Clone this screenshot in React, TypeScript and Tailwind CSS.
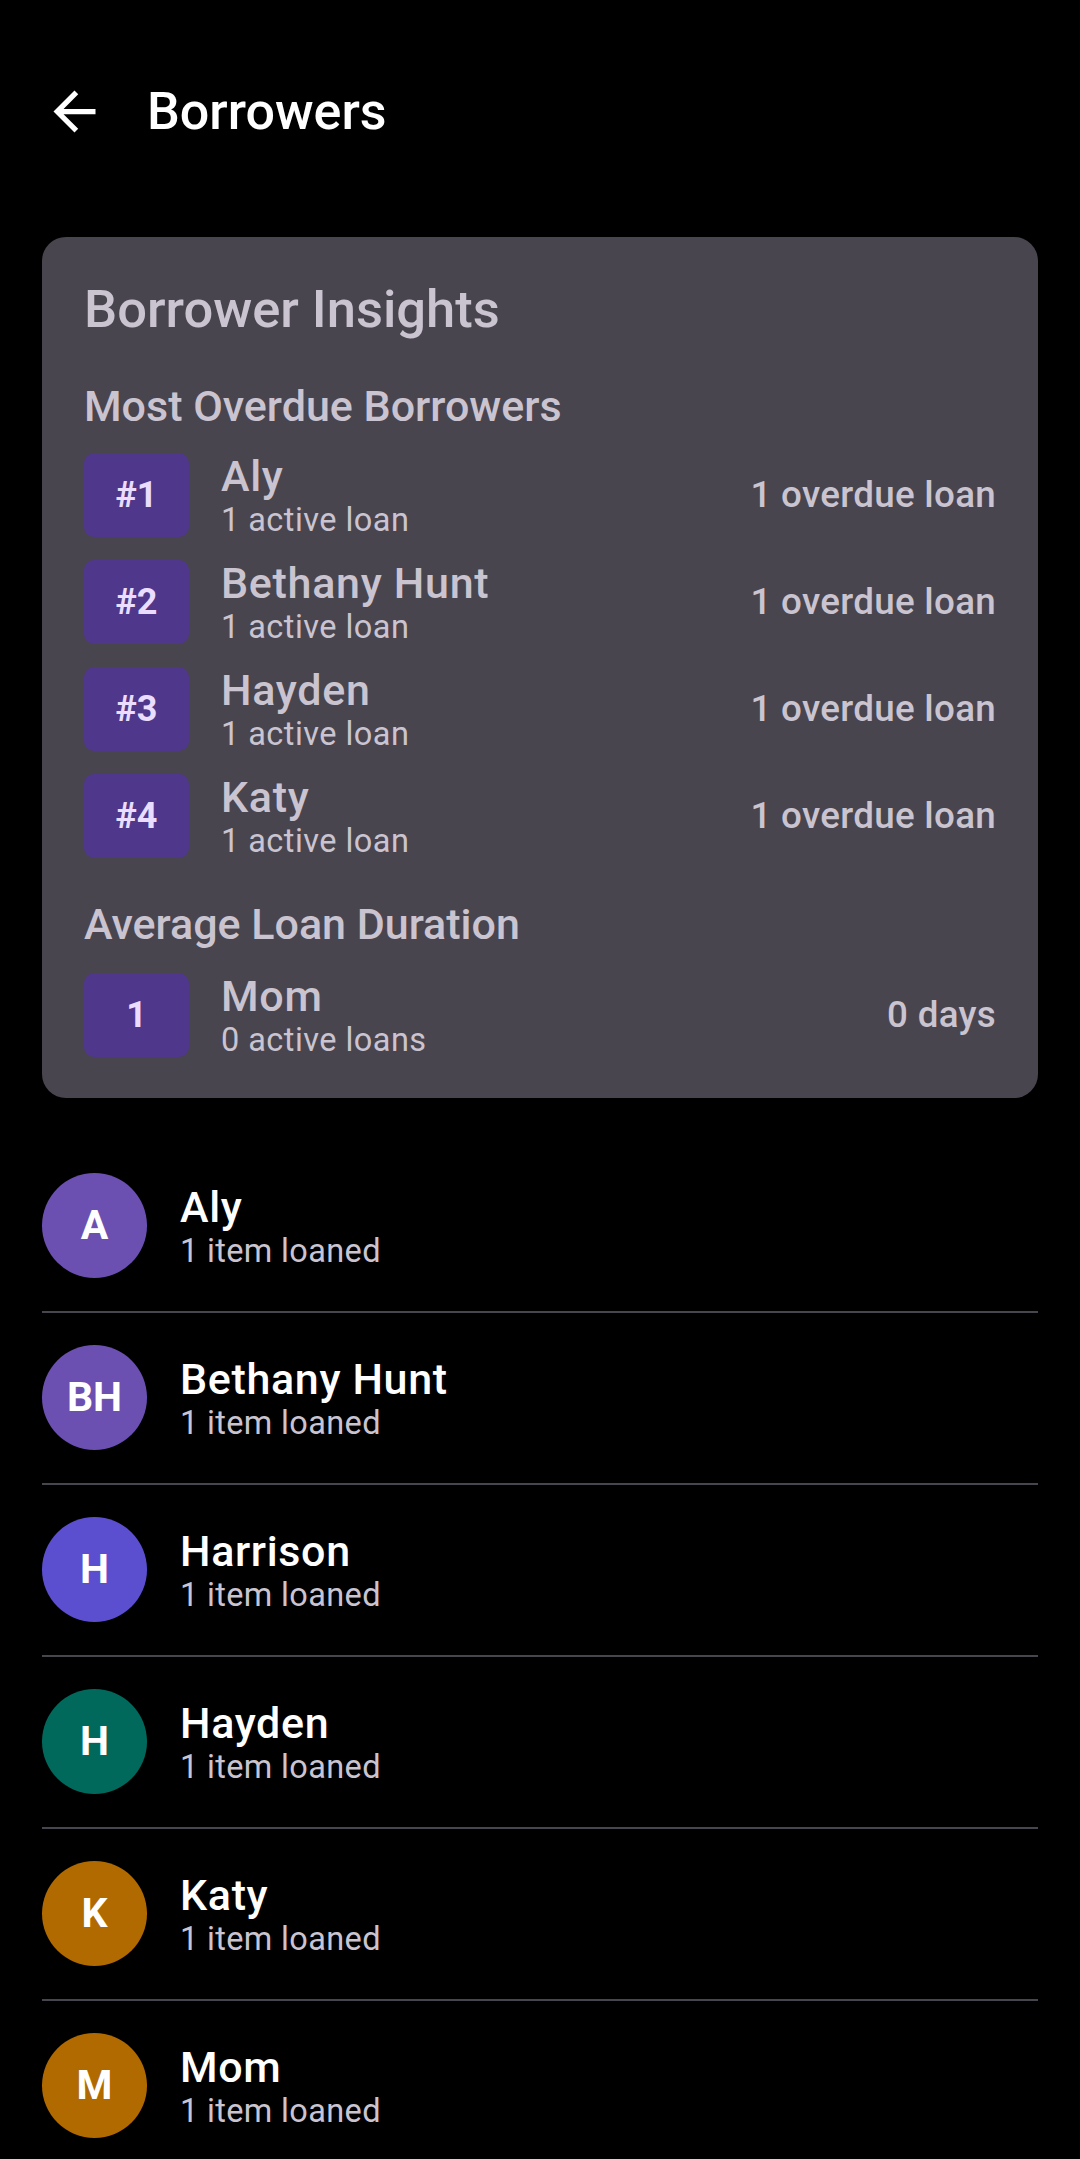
import React from "react";

type Rank = { badge: string; name: string; sub: string; value: string };

const overdue: Rank[] = [
  { badge: "#1", name: "Aly", sub: "1 active loan", value: "1 overdue loan" },
  { badge: "#2", name: "Bethany Hunt", sub: "1 active loan", value: "1 overdue loan" },
  { badge: "#3", name: "Hayden", sub: "1 active loan", value: "1 overdue loan" },
  { badge: "#4", name: "Katy", sub: "1 active loan", value: "1 overdue loan" },
];

const duration: Rank[] = [{ badge: "1", name: "Mom", sub: "0 active loans", value: "0 days" }];

type Person = { initials: string; name: string; color: string };

const people: Person[] = [
  { initials: "A", name: "Aly", color: "bg-[#6B50B1]" },
  { initials: "BH", name: "Bethany Hunt", color: "bg-[#6B50B1]" },
  { initials: "H", name: "Harrison", color: "bg-[#5B4FCF]" },
  { initials: "H", name: "Hayden", color: "bg-[#00695C]" },
  { initials: "K", name: "Katy", color: "bg-[#B06A00]" },
  { initials: "M", name: "Mom", color: "bg-[#B06A00]" },
];

function RankRow({ r }: { r: Rank }) {
  return (
    <div className="flex h-[88px] items-center">
      <div className="flex h-[84px] w-[105px] shrink-0 items-center justify-center rounded-[10px] bg-[#4F378B] text-[36px] font-bold text-[#EADDFF]">
        {r.badge}
      </div>
      <div className="ml-[32px] flex flex-col">
        <div className="text-[43px] leading-[50px] font-medium tracking-[0.7px]">{r.name}</div>
        <div className="text-[32.5px] leading-[38px] tracking-[0.45px]">{r.sub}</div>
      </div>
      <div className="ml-auto text-[36.75px] leading-[44px] font-medium tracking-[0.3px]">{r.value}</div>
    </div>
  );
}

export default function App() {
  return (
    <div className="min-h-screen bg-black font-['Roboto',sans-serif] text-white">
      <header className="flex h-[126px] items-center pt-[48px] box-content">
        <div className="ml-[43px] flex h-[63px] w-[63px] items-center justify-center">
          <svg viewBox="0 0 24 24" className="h-[63px] w-[63px]" fill="#ffffff">
            <path d="M20 11H7.83l5.59-5.59L12 4l-8 8 8 8 1.41-1.41L7.83 13H20v-2z" />
          </svg>
        </div>
        <h1 className="ml-[41px] text-[52px] leading-[61px] font-medium">Borrowers</h1>
      </header>

      <section className="mx-[42px] mt-[63px] rounded-[24px] bg-[#49454F] px-[42px] pt-[42px] pb-[39px] text-[#CAC4D0]">
        <h2 className="text-[52.5px] leading-[61px] font-medium">Borrower Insights</h2>
        <h3 className="mt-[41px] text-[43px] leading-[50px] font-medium">Most Overdue Borrowers</h3>
        <div className="mt-[20px] flex flex-col gap-[19px]">
          {overdue.map((r) => (
            <RankRow key={r.badge} r={r} />
          ))}
        </div>
        <h3 className="mt-[39px] text-[43px] leading-[50px] font-medium">Average Loan Duration</h3>
        <div className="mt-[22px] flex flex-col">
          {duration.map((r) => (
            <RankRow key={r.badge} r={r} />
          ))}
        </div>
      </section>

      <ul className="mt-[43px] px-[42px]">
        {people.map((p, i) => (
          <li key={i} className="flex items-center border-b-2 border-[#49454F] pt-[32px] pb-[33px]">
            <div
              className={`flex h-[105px] w-[105px] shrink-0 items-center justify-center rounded-full ${p.color} text-[41px] font-bold text-white`}
            >
              {p.initials}
            </div>
            <div className="ml-[33px] flex flex-col">
              <div className="text-[43px] leading-[50px] font-medium tracking-[0.65px] text-white">{p.name}</div>
              <div className="text-[32.5px] leading-[38px] tracking-[0.35px] text-[#CAC4D0]">1 item loaned</div>
            </div>
          </li>
        ))}
      </ul>
    </div>
  );
}
